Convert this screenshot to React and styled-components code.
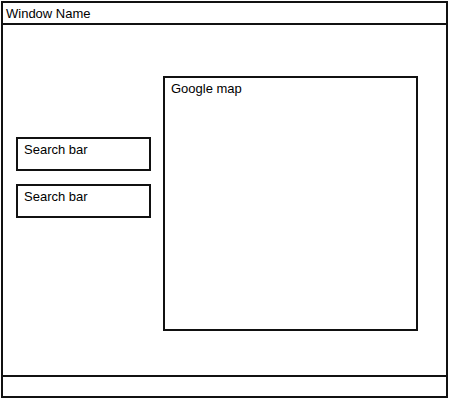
import React from 'react';
import styled, { createGlobalStyle } from 'styled-components';

const GlobalStyle = createGlobalStyle`
	body {
		margin: 0;
		background: #fff;
		font-family: 'Liberation Sans', Arial, sans-serif;
		color: #000;
	}
`;

const Window = styled.div`
	margin: 1px 0 0 1px;
	width: 447px;
	height: 397px;
	box-sizing: border-box;
	border: 2px solid #111;
	display: flex;
	flex-direction: column;
`;

const TitleBar = styled.div`
	height: 22px;
	box-sizing: border-box;
	border-bottom: 2px solid #111;
	padding: 3px 0 0 3px;
	font-size: 13px;
`;

const Body = styled.div`
	flex: 1;
	display: flex;
	gap: 12px;
	padding: 51px 0 0 13px;
`;

const Sidebar = styled.div`
	margin-top: 61px;
	display: flex;
	flex-direction: column;
	gap: 13px;
`;

const Box = styled.div`
	box-sizing: border-box;
	width: ${(p) => p.$w}px;
	height: ${(p) => p.$h}px;
	border: 2px solid #111;
	padding: 3px 0 0 6px;
	font-size: 13px;
`;

const StatusBar = styled.div`
	height: 21px;
	box-sizing: border-box;
	border-top: 2px solid #111;
`;

const App = () => {
	return (
		<>
			<GlobalStyle />
			<Window>
				<TitleBar>Window Name</TitleBar>
				<Body>
					<Sidebar>
						<Box $w={135} $h={34}>Search bar</Box>
						<Box $w={135} $h={34}>Search bar</Box>
					</Sidebar>
					<Box $w={255} $h={255}>Google map</Box>
				</Body>
				<StatusBar />
			</Window>
		</>
	);
};

export default App;
